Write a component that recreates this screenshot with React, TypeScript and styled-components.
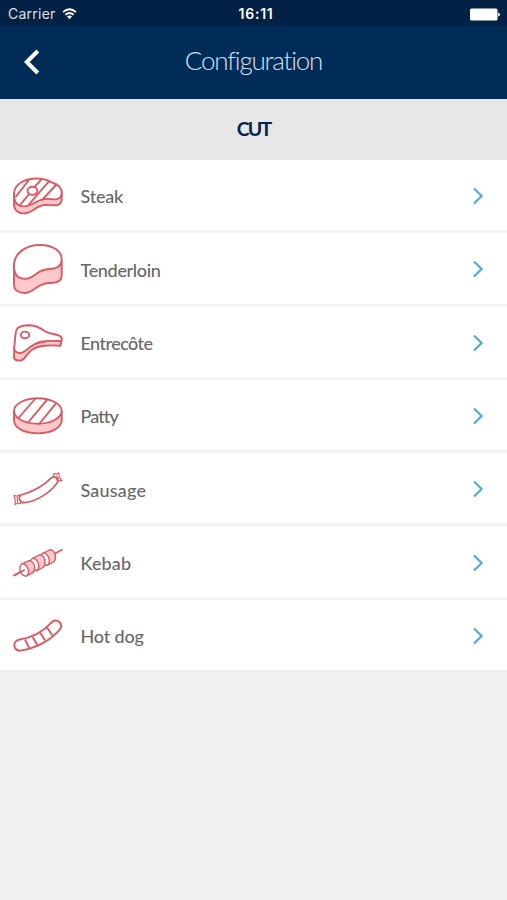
import styled, { createGlobalStyle } from 'styled-components'
import type { ReactNode } from 'react'

type LabelProps = {
	$tracking: number
}

type Cut = {
	name: string
	tracking: number
	icon: ReactNode
}

const GlobalStyle = createGlobalStyle`
	* {
		box-sizing: border-box;
	}
	body {
		margin: 0;
		background: #f0f0f0;
		font-family: 'Lato', 'Liberation Sans', sans-serif;
	}
`

const Screen = styled.div`
	display: flex;
	flex-direction: column;
	width: 100%;
	min-height: 100vh;
	background: #f0f0f0;
`

const StatusBar = styled.div`
	display: grid;
	grid-template-columns: 1fr auto 1fr;
	align-items: center;
	height: 26px;
	padding: 1px 7px 0 8px;
	background: #022144;
	color: #fff;
	font-family: 'Inter', sans-serif;
	font-size: 14px;
	line-height: 26px;
`

const Carrier = styled.div`
	display: flex;
	align-items: center;
	gap: 6px;
	color: #d9e0e8;
	letter-spacing: 0.25px;
`

const Clock = styled.div`
	padding-left: 4px;
	font-weight: 600;
	letter-spacing: 0.8px;
`

const Battery = styled.svg`
	justify-self: end;
`

const Header = styled.header`
	display: grid;
	grid-template-columns: 64px 1fr 64px;
	align-items: center;
	height: 73px;
	background: #022c58;
`

const BackButton = styled.button`
	display: flex;
	padding: 0 0 2px 23px;
	border: 0;
	background: none;
`

const Title = styled.h1`
	margin: 0;
	padding-bottom: 5px;
	color: #d5e0ee;
	font-size: 26px;
	font-weight: 300;
	line-height: 30px;
	text-align: center;
	letter-spacing: -1.2px;
`

const SectionTitle = styled.h2`
	margin: 0;
	height: 61px;
	background: #e7e7e7;
	color: #06234a;
	font-size: 19.5px;
	font-weight: 700;
	line-height: 59px;
	text-align: center;
	letter-spacing: -1.8px;
`

const List = styled.ul`
	margin: 0;
	padding: 0;
	list-style: none;
`

const Row = styled.li`
	display: flex;
	align-items: center;
	height: 73.3px;
	padding: 0 23.5px 0 12px;
	background: #fff;
	border-bottom: 3px solid #f4f4f4;
	&:last-child {
		height: 70.3px;
		border-bottom: 0;
	}
`

const CutIcon = styled.svg`
	flex: none;
	width: 52px;
	height: 52px;
	fill: none;
	stroke: #dc5a62;
	stroke-width: 1.9;
	stroke-linecap: round;
	stroke-linejoin: round;
`

const Label = styled.span<LabelProps>`
	flex: 1;
	padding: 2.5px 0 0 16.5px;
	color: #686868;
	font-size: 18px;
	font-weight: 500;
	line-height: 24px;
	letter-spacing: ${({ $tracking }) => $tracking}px;
`

const Chevron = styled.svg`
	flex: none;
	margin-top: 2px;
`

const PINK = '#fbc8cc'

const cuts: Cut[] = [
	{
		name: 'Steak',
		tracking: -0.2,
		icon: (
			<>
				<path
					fill={PINK}
					d="M2 24V35C2 41 6 44.4 12 44.4C21 44.4 23 36.5 33 36C40 35.7 49.7 39 49.7 30V22Z"
				/>
				<path
					fill="#fff"
					d="M2 25C2 15 13 9.5 25 9.5C34 9.5 37 12 41 14C46 16 49.7 18 49.7 24C49.7 29 46 31 40 30.2C25 28 23 37 12 37.4C5 37.4 2 33 2 25Z"
				/>
				<path d="M4 27.5L16.5 11.5M8 36L17.7 24.4M22.5 18L29.5 10.3M17 35.4L36.5 12.8M30.5 30.5L44.5 15.5" />
				<ellipse cx="20.4" cy="21.8" rx="4.9" ry="4.1" fill="#fff" />
			</>
		)
	},
	{
		name: 'Tenderloin',
		tracking: -0.33,
		icon: (
			<>
				<path
					fill={PINK}
					d="M2 22V43C2 48.5 7 51 13 51C22 51 24 41.5 37 41C44 40.8 49.7 40 49.7 33V20Z"
				/>
				<path
					fill="#fff"
					d="M2 24C2 11 14 3 28 3C41 3 49.7 9 49.7 17.5C49.7 25 44 26.8 37 27C24 27.5 23 36.8 13 36.8C5 36.8 2 32 2 24Z"
				/>
			</>
		)
	},
	{
		name: 'Entrecôte',
		tracking: -0.55,
		icon: (
			<>
				<path
					fill={PINK}
					d="M2.2 32L2 41.5C2 44.8 9 45.8 11.5 43C17 36.5 20 30.8 32 29.7C38 29.2 43 29.3 48.6 29.8L49.7 22Z"
				/>
				<path
					fill="#fff"
					d="M2.2 32C3 25 3 19 4.3 14.5C5.5 10 11 9.3 18 9.3C25 9.5 29 12.5 33.5 15.5C38 18.5 44 17.5 48.5 20.2Q50.2 21.5 49.4 25.2C42 25 36 24.3 29 25.7C17 28.5 15 36.2 8.5 37C4 37.2 2 34.5 2.2 32Z"
				/>
				<ellipse cx="13" cy="18.9" rx="4.2" ry="3.3" />
			</>
		)
	},
	{
		name: 'Patty',
		tracking: -0.9,
		icon: (
			<>
				<path
					fill={PINK}
					d="M2 22V31C2 39 12.5 44.4 25.8 44.4S49.7 39 49.7 31V22Z"
				/>
				<ellipse cx="25.8" cy="22" rx="23.8" ry="12.7" fill="#fff" />
				<path d="M6.5 29L23 10M16 33.5L35 10.8M27.5 34.5L44 14.3" />
			</>
		)
	},
	{
		name: 'Sausage',
		tracking: 0.2,
		icon: (
			<>
				<path
					strokeWidth="1.7"
					d="M8.5 33.2C21 29.7 31 24.5 39.3 15.9C43 13 47.4 17.5 44.8 21.4C37 31.4 24 39.6 12.3 40.7C8 41 5.8 36 8.5 33.2Z"
				/>
				<path
					strokeWidth="1.2"
					d="M8 34.5L7.3 32.8L5.2 34.2L2 33.2L3.2 37.5L3.1 42.4L6 41L8 41.8L9 39.3M5.2 35.5L5.6 39.8M41.3 15.2L42.2 11.3L44.5 12.2L46.8 10.8L47.2 15L50 18.7L47.3 18.5L45.5 20M44.3 14.3L46.6 17.2"
				/>
			</>
		)
	},
	{
		name: 'Kebab',
		tracking: 0.1,
		icon: (
			<>
				<path strokeWidth="1.7" d="M2 39.4L12 34M43 17.5L50 13.8" />
				<g strokeWidth="1.4">
					<path
						fill={PINK}
						d="M31.5 17.2L37.5 14C40.5 13 43 16 43.4 20C43.6 23 43 25 41.4 26L35 29.3Z"
					/>
					<ellipse
						cx="33"
						cy="23.2"
						rx="4"
						ry="6.3"
						transform="rotate(-20 33 23.2)"
						fill="#fff"
					/>
					<path
						fill={PINK}
						d="M20.5 22.4L27 19C30.5 18 33 22 33 26C33 29 32.5 30.5 31 31.5L24.5 34.8Z"
					/>
					<ellipse
						cx="22.5"
						cy="28.5"
						rx="4"
						ry="6.3"
						transform="rotate(-20 22.5 28.5)"
						fill="#fff"
					/>
					<path
						fill={PINK}
						d="M10 28L16.5 24.8C20 24 22.5 27.5 22.7 31.5C22.8 34.2 22 36 20.5 36.8L14.5 40Z"
					/>
					<ellipse
						cx="12.2"
						cy="34"
						rx="4"
						ry="6.3"
						transform="rotate(-20 12.2 34)"
						fill="#fff"
					/>
				</g>
				<path strokeWidth="1.7" d="M2 39.4L12 34.2" />
			</>
		)
	},
	{
		name: 'Hot dog',
		tracking: -0.15,
		icon: (
			<>
				<path strokeWidth="13" d="M7.8 36.2Q30 32.4 43.7 17" />
				<path strokeWidth="9" stroke="#fff" d="M7.8 36.2Q30 32.4 43.7 17" />
				<path
					strokeLinecap="butt"
					d="M13 30.5L17.2 39M20.7 28L25.3 36M28.2 23.5L33 31.6M35 18.5L40.5 26.5"
				/>
			</>
		)
	}
]

const App = () => {
	return (
		<>
			<GlobalStyle />
			<Screen>
				<StatusBar>
					<Carrier>
						Carrier
						<svg width="15" height="12" viewBox="0 0 15 12" fill="none">
							<path
								d="M1 4.2Q7.5 -1.6 14 4.2M3.4 6.8Q7.5 3.3 11.6 6.8"
								stroke="#fff"
								strokeWidth="1.8"
							/>
							<path d="M5 8.6Q7.5 6.6 10 8.6L7.5 11.3Z" fill="#fff" />
						</svg>
					</Carrier>
					<Clock>16:11</Clock>
					<Battery width="30" height="13" viewBox="0 0 30 13">
						<rect x="0" y="0.5" width="27.5" height="12" rx="1.5" fill="#fff" />
						<path d="M28.2 4.5Q30 5 30 6.5T28.2 8.5Z" fill="#fff" />
					</Battery>
				</StatusBar>
				<Header>
					<BackButton aria-label="Back">
						<svg width="18" height="26" viewBox="0 0 18 26" fill="none">
							<path d="M14.8 2L3.8 13L14.8 24" stroke="#fff" strokeWidth="4" />
						</svg>
					</BackButton>
					<Title>Configuration</Title>
				</Header>
				<SectionTitle>CUT</SectionTitle>
				<List>
					{cuts.map(({ name, tracking, icon }) => (
						<Row key={name}>
							<CutIcon viewBox="0 0 52 52">{icon}</CutIcon>
							<Label $tracking={tracking}>{name}</Label>
							<Chevron width="12" height="18" viewBox="0 0 12 18" fill="none">
								<path d="M2 1.5L9.6 9L2 16.5" stroke="#4fa8d8" strokeWidth="2.1" />
							</Chevron>
						</Row>
					))}
				</List>
			</Screen>
		</>
	)
}

export default App
